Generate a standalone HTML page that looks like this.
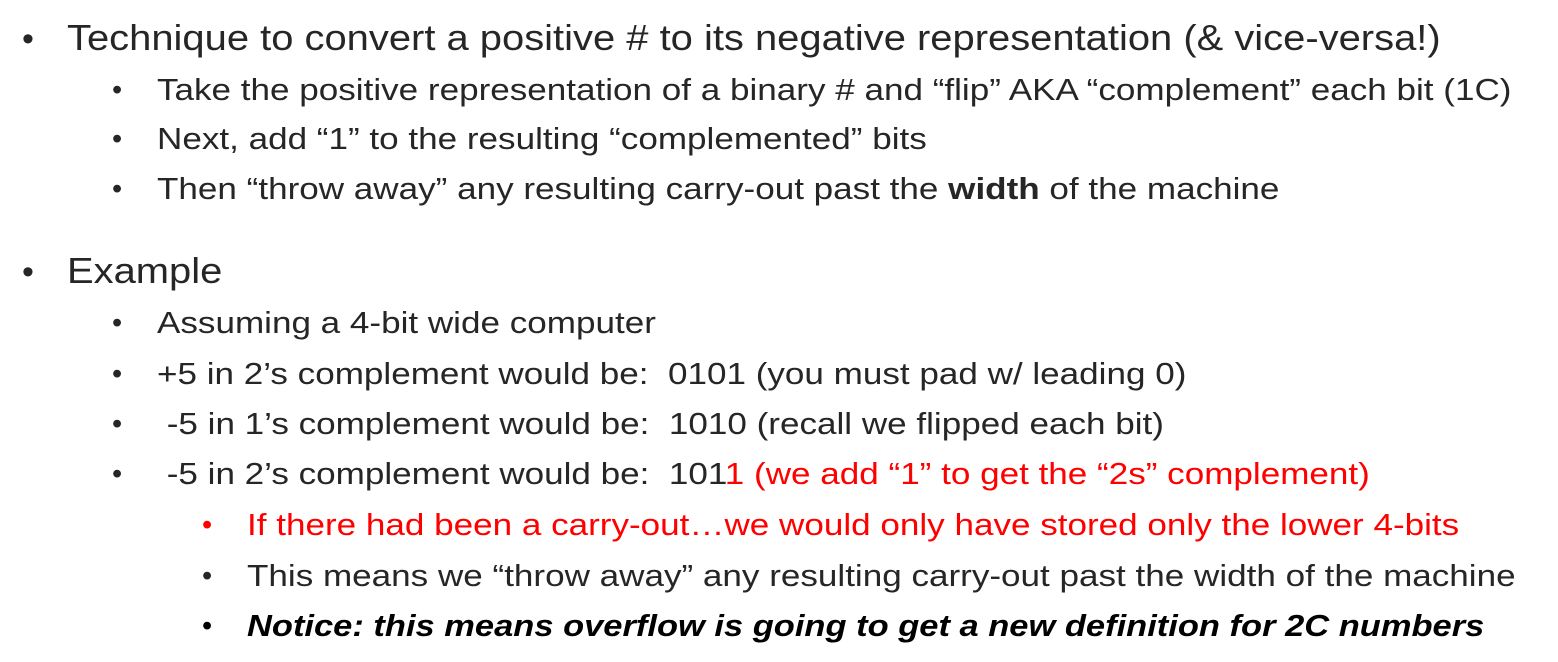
<!DOCTYPE html>
<html><head><meta charset="utf-8"><style>
html,body{margin:0;padding:0;background:#fff;width:1558px;height:662px;overflow:hidden}
.l{position:absolute;white-space:nowrap;font-family:"Liberation Sans",sans-serif;color:#262626;line-height:1;transform-origin:0 50%}
.b{position:absolute;font-family:"Liberation Sans",sans-serif;color:#262626;line-height:1}
.a{font-size:34px}
.c{font-size:29px}
.l.a{font-size:36px;transform:scaleX(1.109)}
.l.c{font-size:31px;transform:scaleX(1.131)}
.l.i{transform:scaleX(1.112)}
.r{color:#ff0000}
</style></head><body>
<div class="b a" style="left:22px;top:22px">•</div>
<div class="l a" style="left:67px;top:20px">Technique to convert a positive # to its negative representation (&amp; vice-versa!)</div>
<div class="b c" style="left:112px;top:76px">•</div>
<div class="l c" style="left:157px;top:74px">Take the positive representation of a binary # and “flip” AKA “complement” each bit (1C)</div>
<div class="b c" style="left:112px;top:125px">•</div>
<div class="l c" style="left:157px;top:123px">Next, add “1” to the resulting “complemented” bits</div>
<div class="b c" style="left:112px;top:175px">•</div>
<div class="l c" style="left:157px;top:173px">Then “throw away” any resulting carry-out past the <b>width</b> of the machine</div>
<div class="b a" style="left:22px;top:255px">•</div>
<div class="l a" style="left:67px;top:253px">Example</div>
<div class="b c" style="left:112px;top:309px">•</div>
<div class="l c" style="left:157px;top:307px">Assuming a 4-bit wide computer</div>
<div class="b c" style="left:112px;top:360px">•</div>
<div class="l c" style="left:157px;top:358px">+5 in 2’s complement would be:&nbsp; 0101 (you must pad w/ leading 0)</div>
<div class="b c" style="left:112px;top:410px">•</div>
<div class="l c" style="left:157px;top:408px">&nbsp;-5 in 1’s complement would be:&nbsp; 1010 (recall we flipped each bit)</div>
<div class="b c" style="left:112px;top:460px">•</div>
<div class="l c" style="left:157px;top:458px">&nbsp;-5 in 2’s complement would be:&nbsp; 101<span class="r">1 (we add “1” to get the “2s” complement)</span></div>
<div class="b c r" style="left:202px;top:511px">•</div>
<div class="l c r" style="left:247px;top:509px">If there had been a carry-out…we would only have stored only the lower 4-bits</div>
<div class="b c" style="left:202px;top:562px">•</div>
<div class="l c" style="left:247px;top:560px">This means we “throw away” any resulting carry-out past the width of the machine</div>
<div class="b c" style="left:202px;top:612px;color:#000">•</div>
<div class="l c i" style="left:247px;top:610px;color:#000;font-weight:bold;font-style:italic">Notice: this means overflow is going to get a new definition for 2C numbers</div>
</body></html>
